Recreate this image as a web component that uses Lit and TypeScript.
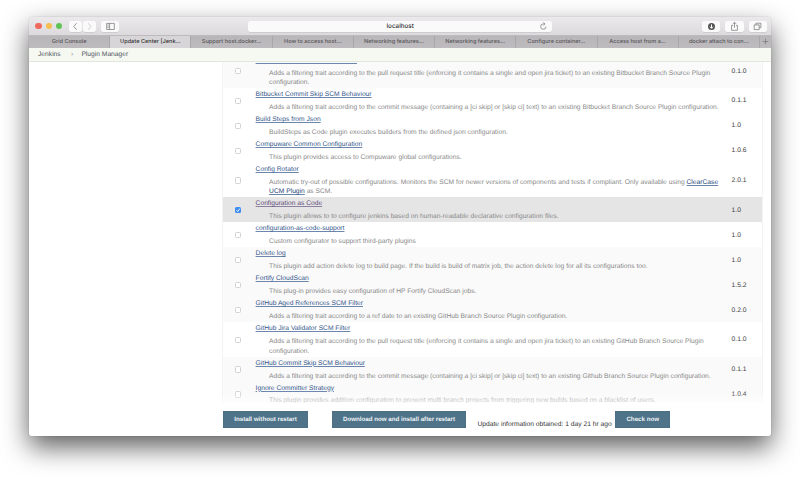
import { LitElement, html, css, svg, nothing, type TemplateResult } from "lit";
import { customElement, property } from "lit/decorators.js";
import { classMap } from "lit/directives/class-map.js";

interface Plugin {
  name: string;
  lines: (string | TemplateResult)[];
  version: string;
  checked?: boolean;
  shaded?: boolean;
}

const PLUGINS: Plugin[] = [
  {
    name: "Bitbucket Jira Validator SCM Filter",
    lines: [
      "Adds a filtering trait according to the pull request title (enforcing it contains a single and open jira ticket) to an existing Bitbucket Branch Source Plugin",
      "configuration.",
    ],
    version: "0.1.0",
    shaded: true,
  },
  {
    name: "Bitbucket Commit Skip SCM Behaviour",
    lines: [
      "Adds a filtering trait according to the commit message (containing a [ci skip] or [skip ci] text) to an existing Bitbucket Branch Source Plugin configuration.",
    ],
    version: "0.1.1",
  },
  {
    name: "Build Steps from Json",
    lines: ["BuildSteps as Code plugin executes builders from the defined json configuration."],
    version: "1.0",
  },
  {
    name: "Compuware Common Configuration",
    lines: ["This plugin provides access to Compuware global configurations."],
    version: "1.0.6",
  },
  {
    name: "Config Rotator",
    lines: [
      html`Automatic try-out of possible configurations. Monitors the SCM for newer versions of components and tests if compliant. Only available using <a class="link">ClearCase</a>`,
      html`<a class="link">UCM Plugin</a> as SCM.`,
    ],
    version: "2.0.1",
  },
  {
    name: "Configuration as Code",
    lines: ["This plugin allows to to configure jenkins based on human-readable declarative configuration files."],
    version: "1.0",
    checked: true,
  },
  {
    name: "configuration-as-code-support",
    lines: ["Custom configurator to support third-party plugins"],
    version: "1.0",
  },
  {
    name: "Delete log",
    lines: [
      "This plugin add action delete log to build page. If the build is build of matrix job, the action delete log for all its configurations too.",
    ],
    version: "1.0",
    shaded: true,
  },
  {
    name: "Fortify CloudScan",
    lines: ["This plug-in provides easy configuration of HP Fortify CloudScan jobs."],
    version: "1.5.2",
    shaded: true,
  },
  {
    name: "GitHub Aged References SCM Filter",
    lines: ["Adds a filtering trait according to a ref date to an existing GitHub Branch Source Plugin configuration."],
    version: "0.2.0",
    shaded: true,
  },
  {
    name: "GitHub Jira Validator SCM Filter",
    lines: [
      "Adds a filtering trait according to the pull request title (enforcing it contains a single and open jira ticket) to an existing GitHub Branch Source Plugin",
      "configuration.",
    ],
    version: "0.1.0",
  },
  {
    name: "GitHub Commit Skip SCM Behaviour",
    lines: [
      "Adds a filtering trait according to the commit message (containing a [ci skip] or [skip ci] text) to an existing Github Branch Source Plugin configuration.",
    ],
    version: "0.1.1",
    shaded: true,
  },
  {
    name: "Ignore Committer Strategy",
    lines: ["This plugin provides addition configuration to prevent multi branch projects from triggering new builds based on a blacklist of users."],
    version: "1.0.4",
    shaded: true,
  },
];

const TABS = [
  "Grid Console",
  "Update Center [Jenk…",
  "Support host.docker…",
  "How to access host…",
  "Networking features…",
  "Networking features…",
  "Configure container…",
  "Access host from a…",
  "docker attach to con…",
];

const ICONS = {
  back: svg`<path d="M6.6 2.2 3.8 5.5l2.8 3.3" />`,
  forward: svg`<path d="M4.2 2.2 7 5.5 4.2 8.8" />`,
  sidebar: svg`<path d="M1.7 2.4h7.6v6.1H1.7zM4.6 2.4v6.1M2.6 4h1M2.6 5.3h1M2.6 6.6h1" />`,
  reload: svg`<path d="M8 5.6A2.7 2.7 0 1 1 5.3 2.9h1.2M5.4 1.4 7 2.9 5.4 4.4" />`,
  download: svg`<circle class="solid" cx="5.5" cy="5.5" r="3.5" /><path class="inverse" d="M5.5 3.4v3.8M3.9 5.7l1.6 1.6 1.6-1.6" />`,
  share: svg`<path d="M4 4.4H2.6v4.9h5.8V4.4H7M5.5 6.7V1.4M3.9 2.9l1.6-1.6 1.6 1.6" />`,
  tabs: svg`<path d="M3.9 3.8V2.2h5v4.5H7.3M2.2 3.9h5v4.7h-5z" />`,
  plus: svg`<path d="M5.5 2.7v5.6M2.7 5.5h5.6" />`,
};

const icon = (name: keyof typeof ICONS) =>
  html`<svg class="icon" viewBox="0 0 11 11" width="11" height="11">${ICONS[name]}</svg>`;

const iconStyles = css`
  .icon {
    display: block;
    flex: none;
    fill: none;
    stroke: #7a787b;
    stroke-width: 0.75;
  }
  .solid {
    fill: #555356;
    stroke: none;
  }
  .inverse {
    stroke: #fff;
    stroke-width: 1;
  }
`;

@customElement("browser-chrome")
export class BrowserChrome extends LitElement {
  static styles = [
    iconStyles,
    css`
      :host {
        display: block;
        flex: none;
        font-family: Inter, "Liberation Sans", sans-serif;
      }
      .toolbar {
        display: flex;
        align-items: center;
        box-sizing: border-box;
        height: 18.5px;
        padding: 0.5px 4px 0 6.3px;
        background: linear-gradient(#ebe9eb, #dcdadc);
        border-bottom: 1px solid #bdbbbd;
      }
      .lights {
        display: flex;
        gap: 3.8px;
        margin-right: 7px;
      }
      .light {
        width: 6.5px;
        height: 6.5px;
        border-radius: 50%;
      }
      .red { background: #ee6a5f; }
      .amber { background: #f5be4f; }
      .green { background: #5fc454; }
      .button {
        display: flex;
        align-items: center;
        justify-content: center;
        height: 11px;
        background: #fbfafb;
        border-radius: 2px;
        box-shadow: 0 0.5px 0.5px rgba(0, 0, 0, 0.14);
      }
      .nav { width: 12.8px; margin-right: 0.7px; }
      .muted { opacity: 0.45; }
      .side { width: 18.5px; margin-left: 4.6px; }
      .address {
        display: grid;
        grid-template-columns: 14px 1fr 14px;
        align-items: center;
        width: 303.5px;
        margin-left: 129px;
        margin-right: auto;
        font-size: 6.3px;
        font-weight: 500;
        color: #2f2e30;
        text-align: center;
      }
      .host { grid-column: 2; }
      .actions {
        display: flex;
        gap: 4.8px;
      }
      .action { width: 18.5px; }
      .tabs {
        display: flex;
        height: 12.5px;
        background: linear-gradient(#b8b6b8, #bdbbbd);
      }
      .tab {
        flex: 1;
        display: flex;
        align-items: center;
        justify-content: center;
        box-sizing: border-box;
        border-right: 1px solid #a9a7a9;
        font-size: 5.6px;
        font-weight: 500;
        white-space: nowrap;
        color: #59575a;
        padding-top: 0.5px;
      }
      .active {
        background: #d7d5d7;
        color: #343335;
      }
      .add {
        display: flex;
        align-items: center;
        width: 11px;
      }
    `,
  ];

  render() {
    return html`
      <div class="toolbar">
        <div class="lights">
          <span class="light red"></span><span class="light amber"></span><span class="light green"></span>
        </div>
        <span class="button nav">${icon("back")}</span>
        <span class="button nav"><span class="muted">${icon("forward")}</span></span>
        <span class="button side">${icon("sidebar")}</span>
        <div class="button address"><span class="host">localhost</span>${icon("reload")}</div>
        <div class="actions">
          <span class="button action">${icon("download")}</span>
          <span class="button action">${icon("share")}</span>
          <span class="button action">${icon("tabs")}</span>
        </div>
      </div>
      <div class="tabs">
        ${TABS.map((t, i) => html`<div class=${classMap({ tab: true, active: i === 1 })}>${t}</div>`)}
        <span class="add">${icon("plus")}</span>
      </div>
    `;
  }
}

@customElement("plugin-row")
export class PluginRow extends LitElement {
  @property({ attribute: false }) plugin!: Plugin;

  static styles = css`
    :host {
      display: block;
    }
    .row {
      display: grid;
      grid-template-columns: 32.3px 476px 1fr;
      align-items: center;
      background: #fff;
    }
    .shaded { background: #fafafa; }
    .selected { background: #e5e5e5; }
    .box {
      display: block;
      box-sizing: border-box;
      width: 6.3px;
      height: 6.3px;
      margin: 0.6px 0 0 11.9px;
      background: #fff;
      border: 1px solid #d2d2d2;
      border-radius: 1.5px;
    }
    .ticked {
      background: #3f8cf4;
      border-width: 0;
    }
    .tick {
      display: block;
      width: 6.3px;
      height: 6.3px;
      fill: none;
      stroke: #fff;
      stroke-width: 1;
    }
    .body {
      padding: 2px 0 0.8px;
      line-height: 9.35px;
      white-space: nowrap;
    }
    .link {
      color: #34568a;
      text-decoration: underline;
      text-decoration-color: #6d86ad;
      text-decoration-thickness: 0.6px;
      text-underline-offset: 0.6px;
    }
    .visited {
      color: #5d4a78;
      text-decoration-color: #8d80a0;
    }
    .text {
      margin: 3.5px 0 0 13.5px;
      color: #888;
    }
    .text .link { color: #1d3f75; }
    .version { color: #3a3a3a; padding-top: 0.6px; }
  `;

  render() {
    const p = this.plugin;
    return html`
      <div class=${classMap({ row: true, shaded: !!p.shaded, selected: !!p.checked })}>
        <span class=${classMap({ box: true, ticked: !!p.checked })}>
          ${p.checked
            ? html`<svg class="tick" viewBox="0 0 7 7"><path d="M1.6 3.6 3 5.1l2.4-3.4" /></svg>`
            : nothing}
        </span>
        <div class="body">
          <a class=${classMap({ link: true, visited: !!p.checked })}>${p.name}</a>
          <div class="text">${p.lines.map((l) => html`<div>${l}</div>`)}</div>
        </div>
        <span class="version">${p.version}</span>
      </div>
    `;
  }
}

@customElement("app-root")
export class AppRoot extends LitElement {
  static styles = css`
    :host {
      display: block;
      box-sizing: border-box;
      height: 477px;
      padding: 17px 29px 0;
      overflow: hidden;
      background: #fff;
      font: 6.7px "Liberation Sans", Arial, sans-serif;
      text-rendering: geometricPrecision;
    }
    .window {
      display: flex;
      flex-direction: column;
      width: 742px;
      height: 418.5px;
      overflow: hidden;
      background: #fff;
      border-radius: 3px 3px 2px 2px;
      box-shadow: 0 0 1px rgba(0, 0, 0, 0.4), 0 11px 27px rgba(0, 0, 0, 0.63);
    }
    .crumbs {
      flex: none;
      display: flex;
      align-items: center;
      box-sizing: border-box;
      height: 13.8px;
      padding: 0.6px 9px 0;
      background: #f6f9f1;
      border-bottom: 1px solid #e2e6dd;
      color: #4d545d;
    }
    .sep {
      width: 4px;
      margin: 0 6.5px 0 10.2px;
      font-size: 6.7px;
      line-height: 6px;
      color: #777;
    }
    .list {
      flex: none;
      position: relative;
      height: 341px;
      margin: 0 7.7px 0 193.3px;
      overflow: hidden;
    }
    .rows {
      margin-top: -8px;
      border: solid #f3f3f3;
      border-width: 0 0.5px;
    }
    .fade {
      position: absolute;
      inset: auto 0 0 0;
      height: 11px;
      background: linear-gradient(rgba(255, 255, 255, 0), rgba(255, 255, 255, 0.7));
    }
    .footer {
      display: flex;
      align-items: flex-start;
      padding: 8.7px 0 0 194.3px;
    }
    .btn {
      display: flex;
      align-items: center;
      justify-content: center;
      box-sizing: border-box;
      height: 16.5px;
      padding-top: 0.5px;
      background: #4f7389;
      border: 1px solid #4b6f85;
      color: #eef3f6;
      font-weight: 700;
      white-space: nowrap;
      font-size: 6.2px;
    }
    .install { width: 84.4px; margin-right: 24.3px; }
    .download { width: 134px; margin-right: 11.5px; }
    .check { width: 54.5px; }
    .info {
      width: 138px;
      padding-top: 9.6px;
      white-space: nowrap;
      color: #333;
    }
  `;

  render() {
    return html`
      <div class="window">
        <browser-chrome></browser-chrome>
        <nav class="crumbs"><span>Jenkins</span><span class="sep">›</span><span>Plugin Manager</span></nav>
        <main class="list">
          <div class="rows">${PLUGINS.map((p) => html`<plugin-row .plugin=${p}></plugin-row>`)}</div>
          <div class="fade"></div>
        </main>
        <footer class="footer">
          <span class="btn install">Install without restart</span>
          <span class="btn download">Download now and install after restart</span>
          <span class="info">Update information obtained: 1 day 21 hr ago</span>
          <span class="btn check">Check now</span>
        </footer>
      </div>
    `;
  }
}
